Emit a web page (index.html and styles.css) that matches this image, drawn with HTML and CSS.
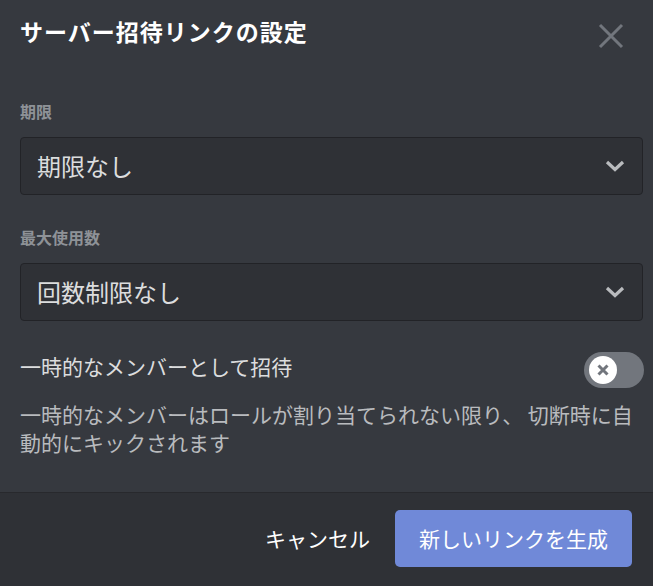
FILE: index.html
```html
<!DOCTYPE html>
<html lang="ja">
<head>
  <meta charset="utf-8">
  <title>サーバー招待リンクの設定</title>
  <link rel="stylesheet" href="styles.css">
</head>
<body>
  <div class="modal">
    <div class="modal-body">
      <div class="header">
        <h2 class="title">サーバー招待リンクの設定</h2>
        <button class="close" aria-label="閉じる">
          <svg width="26" height="26" viewBox="0 0 26 26">
            <path d="M2 2 L24 24 M24 2 L2 24" stroke="#72767d" stroke-width="3" fill="none"/>
          </svg>
        </button>
      </div>

      <div class="field-label">期限</div>
      <div class="select">
        <span class="select-value">期限なし</span>
        <svg class="chevron" width="20" height="12" viewBox="0 0 20 12">
          <path d="M2 2 L10 9.5 L18 2" stroke="#b9bbbe" stroke-width="3.2" fill="none"/>
        </svg>
      </div>

      <div class="field-label">最大使用数</div>
      <div class="select">
        <span class="select-value">回数制限なし</span>
        <svg class="chevron" width="20" height="12" viewBox="0 0 20 12">
          <path d="M2 2 L10 9.5 L18 2" stroke="#b9bbbe" stroke-width="3.2" fill="none"/>
        </svg>
      </div>

      <div class="toggle-row">
        <span class="toggle-label">一時的なメンバーとして招待</span>
        <div class="switch">
          <div class="knob">
            <svg width="12" height="12" viewBox="0 0 12 12">
              <path d="M1.5 1.5 L10.5 10.5 M10.5 1.5 L1.5 10.5" stroke="#72767d" stroke-width="3" fill="none"/>
            </svg>
          </div>
        </div>
      </div>
      <p class="note">一時的なメンバーはロールが割り当てられない限り、 切断時に自動的にキックされます</p>
    </div>

    <div class="footer">
      <button class="btn-cancel">キャンセル</button>
      <button class="btn-primary">新しいリンクを生成</button>
    </div>
  </div>
</body>
</html>
```

FILE: styles.css
```css
html, body {
  margin: 0;
  height: 100%;
}
body {
  background-color: #36393f;
  font-family: "Noto Sans CJK JP", "Noto Sans", sans-serif;
  color: #dcddde;
}
.modal {
  height: 100%;
  display: flex;
  flex-direction: column;
}
.modal-body {
  flex: 1;
  padding: 0 10px 0 20px;
}
.header {
  display: flex;
  justify-content: space-between;
  align-items: flex-start;
  padding-top: 18px;
}
.title {
  margin: 0;
  font-size: 23px;
  line-height: 26px;
  font-weight: 700;
  color: #ffffff;
  letter-spacing: 1px;
}
.close {
  background: none;
  border: none;
  padding: 0;
  margin: 5px 19px 0 0;
  cursor: pointer;
  display: flex;
}
.field-label {
  margin-top: 52px;
  font-size: 16px;
  line-height: 20px;
  font-weight: 700;
  color: #8e9297;
}
.select + .field-label {
  margin-top: 32px;
}
.select {
  margin-top: 16px;
  height: 56px;
  display: flex;
  align-items: center;
  justify-content: space-between;
  padding: 0 17px 0 16px;
  background-color: #2f3136;
  border: 1px solid #222327;
  border-radius: 4px;
}
.select-value {
  font-size: 24px;
  line-height: 30px;
  color: #dcddde;
}
.toggle-row {
  margin-top: 31px;
  display: flex;
  justify-content: space-between;
  align-items: center;
}
.toggle-label {
  font-size: 21px;
  line-height: 26px;
  color: #dcddde;
  margin-top: -8px;
}
.switch {
  width: 60px;
  height: 36px;
  border-radius: 18px;
  background-color: #72767d;
  display: flex;
  align-items: center;
  padding-left: 5px;
  box-sizing: border-box;
  margin-right: -1px;
}
.knob {
  width: 28px;
  height: 28px;
  border-radius: 50%;
  background-color: #ffffff;
  display: flex;
  align-items: center;
  justify-content: center;
}
.note {
  margin: 12px 0 0;
  font-size: 21px;
  line-height: 28px;
  color: #b9bbbe;
}
.footer {
  height: 94px;
  box-sizing: border-box;
  background-color: #2f3136;
  box-shadow: inset 0 1px 0 rgba(0,0,0,0.15);
  display: flex;
  justify-content: flex-end;
  align-items: center;
  padding: 0 21px 2px 0;
}
.btn-cancel {
  background: none;
  border: none;
  font-family: inherit;
  font-size: 21px;
  color: #ffffff;
  margin-right: 25px;
  padding: 0;
  cursor: pointer;
}
.btn-primary {
  width: 237px;
  height: 57px;
  background-color: #7089d8;
  color: #ffffff;
  border: none;
  border-radius: 5px;
  font-family: inherit;
  font-size: 21px;
  cursor: pointer;
}
```
